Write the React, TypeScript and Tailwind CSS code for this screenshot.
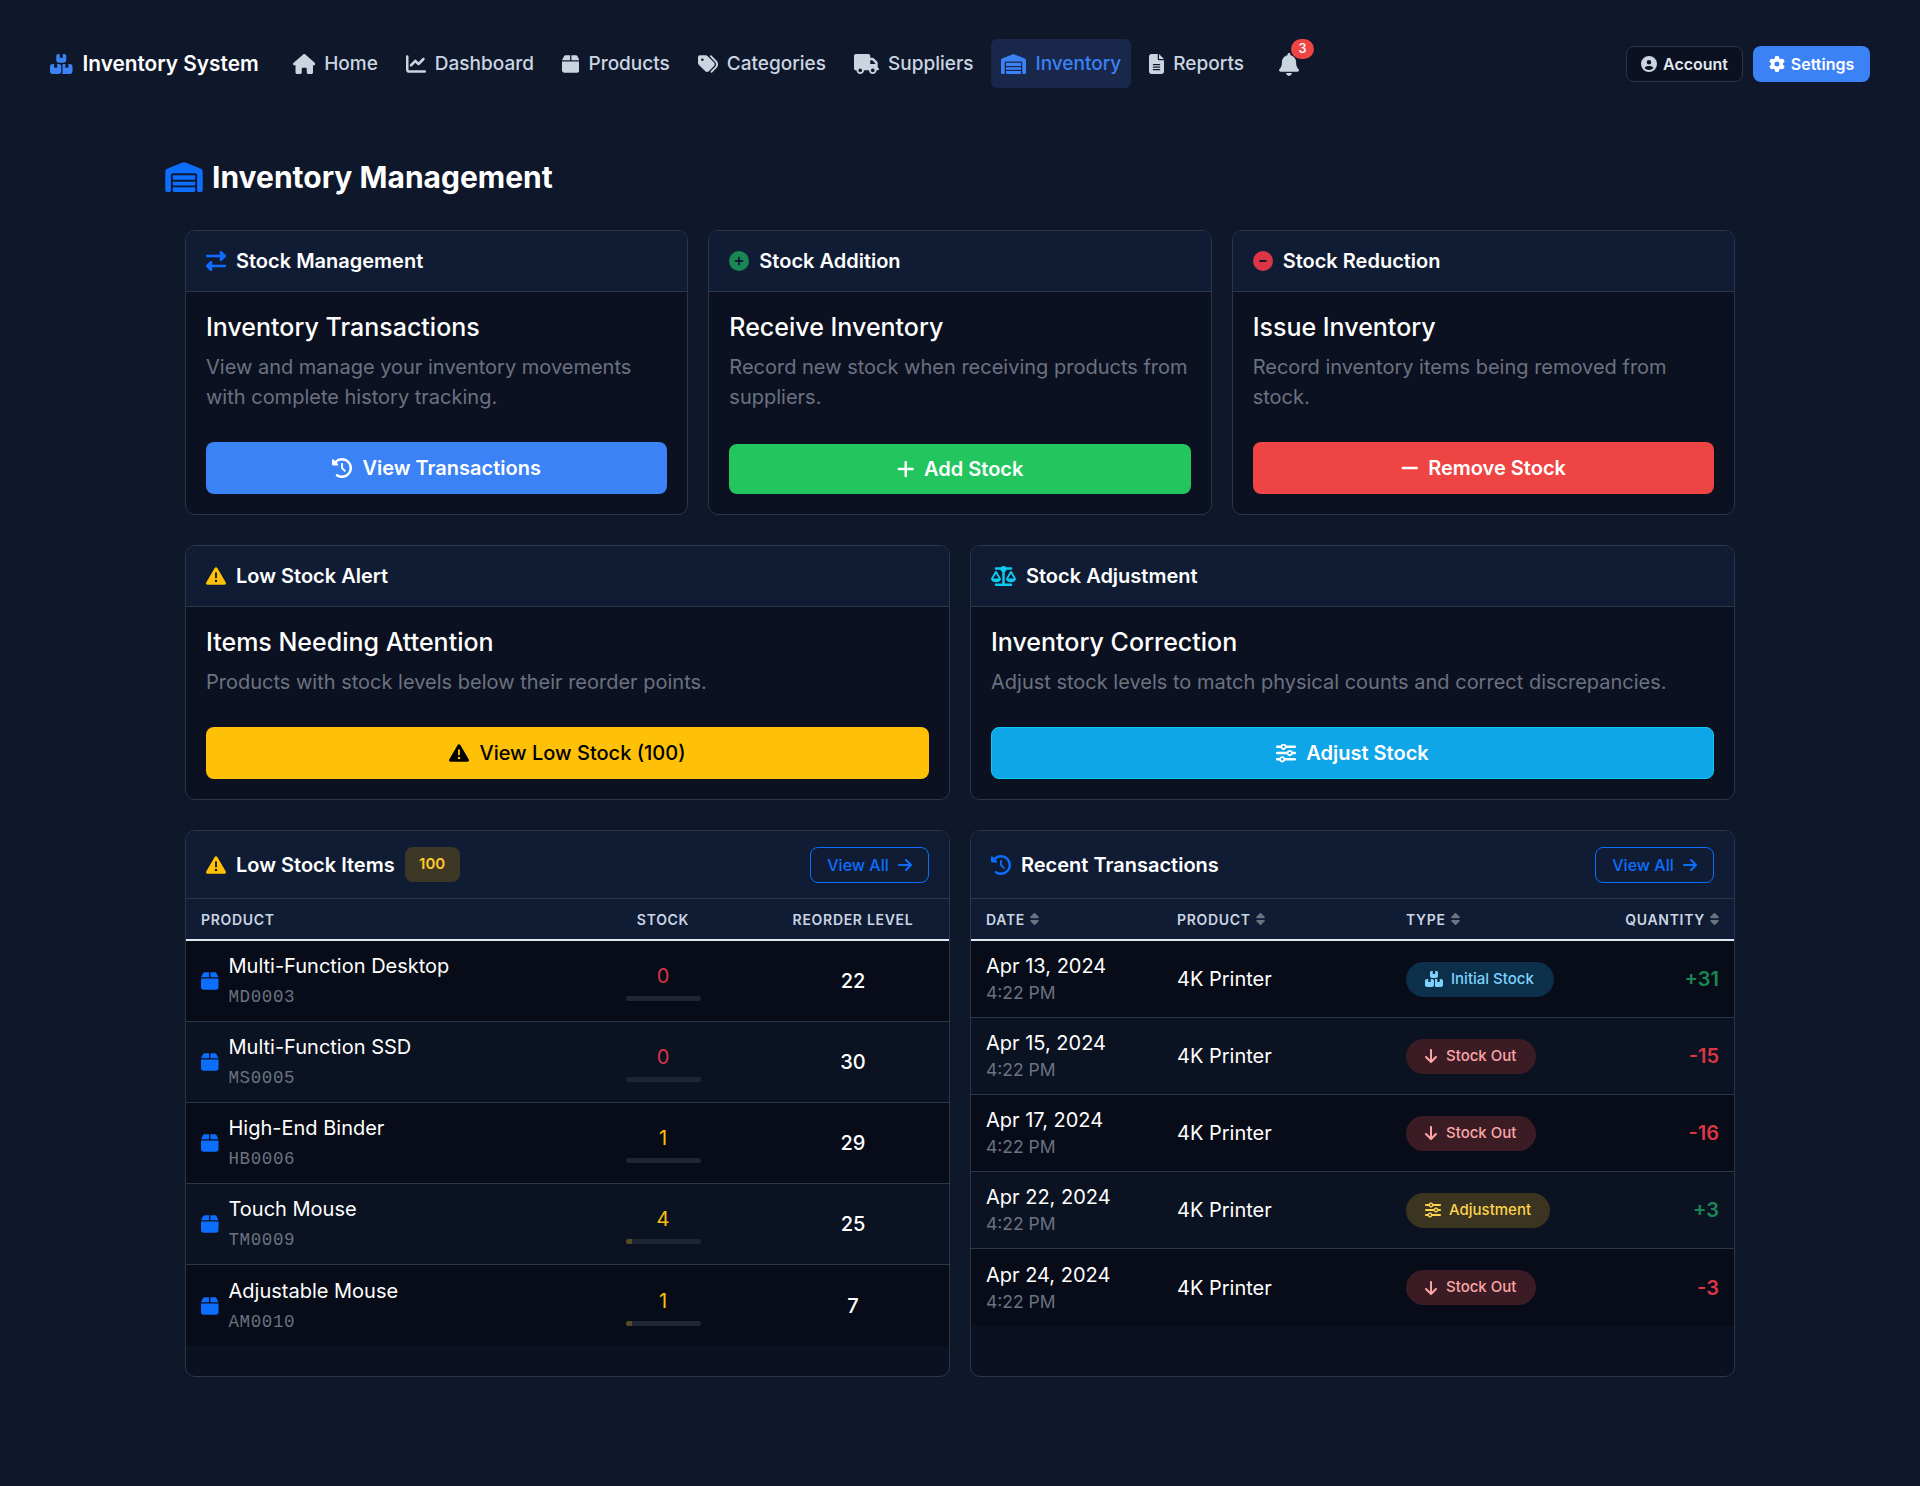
import React from "react";
import {
  FaBoxesStacked, FaHouse, FaChartLine, FaBox, FaTags, FaTruck, FaWarehouse, FaFileLines, FaBell,
  FaCircleUser, FaGear, FaRightLeft, FaCirclePlus, FaCircleMinus, FaClockRotateLeft,
  FaTriangleExclamation, FaScaleBalanced, FaSort, FaSliders, FaArrowRight, FaArrowDown, FaPlus, FaMinus,
} from "react-icons/fa6";

type IconT = React.ComponentType<{ className?: string }>;

const NAV: { label: string; Icon: IconT; w: string; active?: boolean }[] = [
  { label: "Home", Icon: FaHouse, w: "w-[22.5px]" },
  { label: "Dashboard", Icon: FaChartLine, w: "w-5" },
  { label: "Products", Icon: FaBox, w: "w-[17.5px]" },
  { label: "Categories", Icon: FaTags, w: "w-5" },
  { label: "Suppliers", Icon: FaTruck, w: "w-[25px]" },
  { label: "Inventory", Icon: FaWarehouse, w: "w-[25px]", active: true },
  { label: "Reports", Icon: FaFileLines, w: "w-[15px]" },
];

function CardHeader({ Icon, color, title }: { Icon: IconT; color: string; title: string }) {
  return (
    <div className="flex h-[61px] items-center gap-[10px] border-b border-[#2a3649] bg-[#0f1c34] px-5">
      <Icon className={`h-5 shrink-0 ${color}`} />
      <span className="text-[20px] font-semibold text-white">{title}</span>
    </div>
  );
}

function ActionCard(props: {
  Icon: IconT; color: string; title: string; heading: string; desc: string;
  BtnIcon: IconT; btn: string; btnClass: string; btnIconClass?: string;
}) {
  const { Icon, color, title, heading, desc, BtnIcon, btn, btnClass, btnIconClass = "w-5" } = props;
  return (
    <div className="flex flex-col overflow-hidden rounded-[10px] border border-[#2a3649] bg-[#0b1120]">
      <CardHeader Icon={Icon} color={color} title={title} />
      <div className="flex flex-1 flex-col p-5">
        <h3 className="text-[25px] leading-[31px] font-medium text-white">{heading}</h3>
        <p className="mt-[9px] mb-[30px] text-[20px] leading-[30px] text-[#6b7280]">{desc}</p>
        <button className={`mt-auto flex items-center justify-center gap-[10px] rounded-lg text-[20px] font-semibold ${btnClass}`}>
          <BtnIcon className={`h-5 ${btnIconClass}`} />
          {btn}
        </button>
      </div>
    </div>
  );
}

function ViewAll() {
  return (
    <button className="flex h-9 w-[119px] items-center justify-center gap-[9px] rounded-lg border border-[#0d6efd] text-[16px] font-medium text-[#0d6efd]">
      View All <FaArrowRight className="h-4 w-[14px]" />
    </button>
  );
}

const LOW = [
  { name: "Multi-Function Desktop", sku: "MD0003", stock: 0, level: 22, red: true, fill: false },
  { name: "Multi-Function SSD", sku: "MS0005", stock: 0, level: 30, red: true, fill: false },
  { name: "High-End Binder", sku: "HB0006", stock: 1, level: 29, red: false, fill: false },
  { name: "Touch Mouse", sku: "TM0009", stock: 4, level: 25, red: false, fill: true },
  { name: "Adjustable Mouse", sku: "AM0010", stock: 1, level: 7, red: false, fill: true },
];

const TX: { date: string; qty: string; kind: "init" | "out" | "adj" }[] = [
  { date: "Apr 13, 2024", qty: "+31", kind: "init" },
  { date: "Apr 15, 2024", qty: "-15", kind: "out" },
  { date: "Apr 17, 2024", qty: "-16", kind: "out" },
  { date: "Apr 22, 2024", qty: "+3", kind: "adj" },
  { date: "Apr 24, 2024", qty: "-3", kind: "out" },
];

function Pill({ kind }: { kind: "init" | "out" | "adj" }) {
  if (kind === "init")
    return (
      <span className="inline-flex h-[35px] items-center gap-[8px] rounded-full bg-[#0c2f4a] pr-[20px] pl-[19px] text-[15px] font-medium text-[#7dd3fc]">
        <FaBoxesStacked className="h-4 w-[18px]" /> Initial Stock
      </span>
    );
  if (kind === "adj")
    return (
      <span className="inline-flex h-[35px] items-center gap-[8px] rounded-full bg-[#3b3420] pr-[19px] pl-[19px] text-[15px] font-medium text-[#fcd34d]">
        <FaSliders className="h-4 w-4" /> Adjustment
      </span>
    );
  return (
    <span className="inline-flex h-[35px] items-center gap-[9px] rounded-full bg-[#3b1c25] pr-[20px] pl-[19px] text-[15px] font-medium text-[#fca5a5]">
      <FaArrowDown className="h-4 w-3" /> Stock Out
    </span>
  );
}

function Th({ children, className = "" }: { children: React.ReactNode; className?: string }) {
  return <div className={`text-[14px] font-semibold tracking-[0.05em] text-[#cbd5e1] uppercase ${className}`}>{children}</div>;
}

function Sort({ label }: { label: string }) {
  return (
    <Th className="flex items-center gap-[5px]">
      {label}
      <FaSort className="h-[14px] w-[9px] text-[#6b7280]" />
    </Th>
  );
}

export default function App() {
  return (
    <div className="min-h-[1486px] bg-[#0f172a] [font-family:Inter,sans-serif] text-white">
      <nav className="flex h-[127px] items-center pr-[50px] pl-[50px]">
        <div className="flex items-center gap-[10px] text-[20.8px] font-semibold">
          <FaBoxesStacked className="h-5 w-[22.5px] text-[#3b82f6]" />
          Inventory System
        </div>
        <div className="ml-[24px] flex items-center gap-[8px]">
          {NAV.map(({ label, Icon, w, active }) => (
            <a
              key={label}
              className={`flex h-[49px] items-center gap-[9px] rounded-md px-[10px] text-[19px] leading-[49px] font-medium ${
                active ? "bg-[#18274a] text-[#3b82f6]" : "text-[#cbd5e1]"
              }`}
            >
              <Icon className={`h-5 ${w}`} />
              {label}
            </a>
          ))}
          <div className="relative ml-[17px] h-[49px] w-[35px] text-[#cbd5e1]">
            <div className="flex h-full items-center">
              <FaBell className="mt-[2px] h-[23px] w-[20px]" />
            </div>
            <span className="absolute top-0 left-[12px] flex h-[20px] w-[23px] items-center justify-center rounded-full bg-[#ef4444] text-[12.5px] font-semibold text-white">
              3
            </span>
          </div>
        </div>
        <div className="ml-auto flex items-center gap-[10px]">
          <button className="flex h-9 w-[117px] items-center justify-center gap-[6px] rounded-lg border border-[#2a3649] bg-[#0b1120] text-[16px] font-semibold text-[#e2e8f0]">
            <FaCircleUser className="h-4 w-4 text-[#cbd5e1]" /> Account
          </button>
          <button className="flex h-9 w-[117px] items-center justify-center gap-[6px] rounded-lg bg-[#3b82f6] text-[16px] font-semibold text-white">
            <FaGear className="h-4 w-4" /> Settings
          </button>
        </div>
      </nav>

      <main className="px-[165px] pt-[28px]">
        <h1 className="flex h-[44px] items-center gap-[9px] text-[30px] font-bold">
          <FaWarehouse className="h-[30px] w-[38px] text-[#0d6efd]" />
          Inventory Management
        </h1>

        <div className="mt-[31px] flex flex-col gap-[30px] px-5">
          <div className="grid grid-cols-3 gap-5">
            <ActionCard
              Icon={FaRightLeft} color="w-5 text-[#0d6efd]" title="Stock Management"
              heading="Inventory Transactions"
              desc="View and manage your inventory movements with complete history tracking."
              BtnIcon={FaClockRotateLeft} btn="View Transactions" btnClass="h-[52px] bg-[#3b82f6] text-white"
            />
            <ActionCard
              Icon={FaCirclePlus} color="w-5 text-[#198754]" title="Stock Addition"
              heading="Receive Inventory"
              desc="Record new stock when receiving products from suppliers."
              BtnIcon={FaPlus} btnIconClass="w-[17.5px]" btn="Add Stock" btnClass="h-[50px] bg-[#22c55e] text-white"
            />
            <ActionCard
              Icon={FaCircleMinus} color="w-5 text-[#dc3545]" title="Stock Reduction"
              heading="Issue Inventory"
              desc="Record inventory items being removed from stock."
              BtnIcon={FaMinus} btnIconClass="w-[17.5px]" btn="Remove Stock" btnClass="h-[52px] bg-[#ef4444] text-white"
            />
          </div>

          <div className="grid grid-cols-2 gap-5">
            <ActionCard
              Icon={FaTriangleExclamation} color="w-5 text-[#ffc107]" title="Low Stock Alert"
              heading="Items Needing Attention"
              desc="Products with stock levels below their reorder points."
              BtnIcon={FaTriangleExclamation} btn="View Low Stock (100)" btnClass="h-[52px] bg-[#ffc107] !font-medium text-black"
            />
            <ActionCard
              Icon={FaScaleBalanced} color="w-[25px] text-[#0dcaf0]" title="Stock Adjustment"
              heading="Inventory Correction"
              desc="Adjust stock levels to match physical counts and correct discrepancies."
              BtnIcon={FaSliders} btn="Adjust Stock" btnClass="h-[52px] border border-[#0dcaf0] bg-[#0ea5e9] text-white"
            />
          </div>

          <div className="grid grid-cols-2 gap-5">
            <div className="overflow-hidden rounded-[10px] border border-[#2a3649] bg-[#0b1120] pb-[30px]">
              <div className="flex h-[68px] items-center justify-between border-b border-[#2a3649] bg-[#0f1c34] px-5">
                <div className="flex items-center gap-[10px] text-[20px] font-semibold">
                  <FaTriangleExclamation className="h-5 w-5 text-[#ffc107]" />
                  Low Stock Items
                  <span className="flex h-[35px] w-[55px] items-center justify-center rounded-lg bg-[#3d3726] text-[15px] font-semibold text-[#ffca2c]">
                    100
                  </span>
                </div>
                <ViewAll />
              </div>
              <div className="grid h-[42px] grid-cols-[383px_188px_1fr] items-center border-b-2 border-[#e2e8f0] bg-[#0f1c34] text-center">
                <Th className="pl-[15px] text-left">Product</Th>
                <Th>Stock</Th>
                <Th>Reorder Level</Th>
              </div>
              {LOW.map((r, i) => (
                <div
                  key={r.sku}
                  className={`grid h-[81px] grid-cols-[383px_188px_1fr] items-center border-[#2a3649] text-center ${
                    i < 4 ? "border-b" : ""
                  } ${i % 2 === 0 ? "bg-[#070c18]" : "bg-[#0b1222]"}`}
                >
                  <div className="flex items-center gap-[10px] pl-[15px] text-left">
                    <FaBox className="h-5 w-[17.5px] text-[#0d6efd]" />
                    <div className="pb-[2px]">
                      <div className="text-[20px] leading-[30px]">{r.name}</div>
                      <div className="mt-[4px] [font-family:'Liberation_Mono',monospace] text-[17.5px] leading-[24px] tracking-[0.6px] text-[#6b7280]">{r.sku}</div>
                    </div>
                  </div>
                  <div className="flex flex-col items-center gap-[5px]">
                    <span className={`text-[20px] leading-[30px] ${r.red ? "text-[#dc3545]" : "text-[#ffc107]"}`}>{r.stock}</span>
                    <div className="h-[5px] w-[75px] overflow-hidden rounded-full bg-[#1e2636]">
                      {r.fill && <div className="h-full w-[6px] bg-[#574b23]" />}
                    </div>
                  </div>
                  <div className="text-[20px] font-medium">{r.level}</div>
                </div>
              ))}
            </div>

            <div className="overflow-hidden rounded-[10px] border border-[#2a3649] bg-[#0b1120]">
              <div className="flex h-[68px] items-center justify-between border-b border-[#2a3649] bg-[#0f1c34] px-5">
                <div className="flex items-center gap-[10px] text-[20px] font-semibold">
                  <FaClockRotateLeft className="h-5 w-5 text-[#0d6efd]" />
                  Recent Transactions
                </div>
                <ViewAll />
              </div>
              <div className="grid h-[42px] grid-cols-[191px_229px_1fr_auto] items-center border-b-2 border-[#e2e8f0] bg-[#0f1c34] pr-[15px] pl-[15px]">
                <Sort label="Date" />
                <Sort label="Product" />
                <Sort label="Type" />
                <Sort label="Quantity" />
              </div>
              {TX.map((t, i) => (
                <div
                  key={t.date}
                  className={`grid h-[77px] grid-cols-[191px_229px_1fr_auto] items-center border-[#2a3649] pr-[15px] pl-[15px] ${
                    i < 4 ? "border-b" : ""
                  } ${i % 2 === 0 ? "bg-[#070c18]" : "bg-[#0b1222]"}`}
                >
                  <div>
                    <div className="text-[20px] leading-[28px]">{t.date}</div>
                    <div className="text-[17.5px] leading-[26px] text-[#6b7280]">4:22 PM</div>
                  </div>
                  <div className="text-[20px]">4K Printer</div>
                  <div><Pill kind={t.kind} /></div>
                  <div className={`text-[20px] font-semibold ${t.qty[0] === "+" ? "text-[#198754]" : "text-[#dc3545]"}`}>{t.qty}</div>
                </div>
              ))}
            </div>
          </div>
        </div>
      </main>
    </div>
  );
}
